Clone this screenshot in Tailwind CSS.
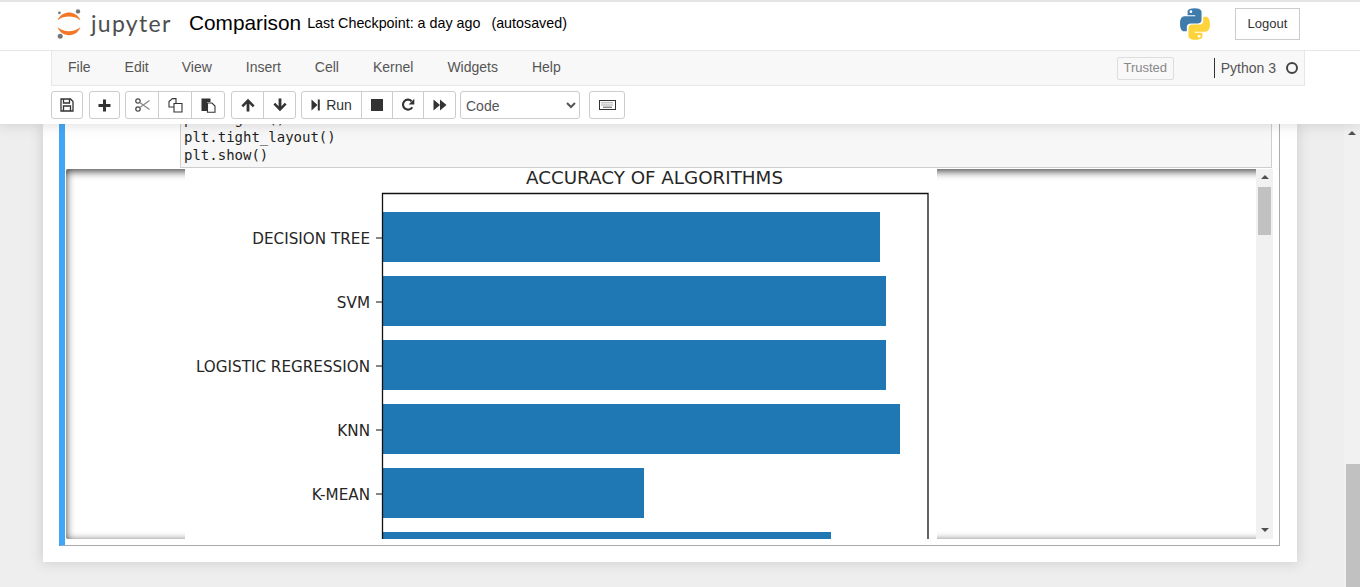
<!DOCTYPE html>
<html lang="en">
  <head>
    <meta charset="UTF-8" />
    <title>Comparison</title>
    <script src="https://cdn.jsdelivr.net/npm/@tailwindcss/browser@4"></script>
  </head>
  <body class="h-screen overflow-hidden flex flex-col bg-[#eeeeee] font-['Liberation_Sans',sans-serif] text-[#333333]">
    <!-- header -->
    <header class="relative z-10 h-[124px] shrink-0 bg-white border-t-2 border-[#e4e4e4] shadow-[0_0_12px_1px_rgba(87,87,87,0.2)]">
      <div class="h-[44px] mb-[4px] flex items-center pl-[57px] pr-[60px]">
        <svg class="w-[24px] h-[30px] shrink-0" viewBox="0 0 24 30">
          <path d="M0.5 11.5C3 5.5 8 3.6 12 3.6C16 3.6 21 5.5 23.5 11.5C20 8.4 16 7.6 12 7.6C8 7.6 4 8.4 0.5 11.5Z" fill="#f37726" />
          <path d="M0.5 18C3 24.5 8 26.2 12 26.2C16 26.2 21 24.5 23.5 18C20 21.4 16 22.2 12 22.2C8 22.2 4 21.4 0.5 18Z" fill="#f37726" />
          <circle cx="21" cy="2.4" r="2.2" fill="#767677" />
          <circle cx="2.4" cy="3.8" r="1.4" fill="#767677" />
          <circle cx="3.2" cy="27.2" r="2.5" fill="#767677" />
        </svg>
        <span class="ml-[10px] -mt-[1px] w-[98px] shrink-0 font-['Lato',sans-serif] text-[23px] leading-none tracking-[1.3px] text-[#4e4e4e]">jupyter</span>
        <span class="-mt-[3px] text-[20.8px] text-black">Comparison</span>
        <span class="ml-[6px] text-[14.3px] text-black">Last Checkpoint: a day ago</span>
        <span class="ml-[11px] text-[14.3px] text-black">(autosaved)</span>
        <svg class="ml-auto w-[30px] h-[32px] shrink-0" viewBox="0 0 110 116">
          <path d="M54 0C26 0 28 12 28 12V26H56V30H17C17 30 0 28 0 57C0 86 15 85 15 85H25V71C25 71 24 56 39 56H65C65 56 79 56 79 43V14C79 14 81 0 54 0Z" fill="#3f7cac" />
          <circle cx="40" cy="13" r="5" fill="#ffffff" />
          <path d="M56 116C84 116 82 104 82 104V90H54V86H93C93 86 110 88 110 59C110 30 95 31 95 31H85V45C85 45 86 60 71 60H45C45 60 31 60 31 73V102C31 102 29 116 56 116Z" fill="#ffd43b" />
          <circle cx="70" cy="103" r="5" fill="#ffffff" />
        </svg>
        <button class="ml-[25px] w-[65px] h-[32px] border border-[#cccccc] text-[13px] text-[#333333]">Logout</button>
      </div>
      <!-- menu bar -->
      <div class="border-t border-[#e7e7e7]">
        <nav class="ml-[51px] w-[1254px] h-[35px] flex items-center pb-[2px] bg-[#f8f8f8] border-x border-b border-[#e7e7e7] text-[14px] text-[#555555]">
          <span class="ml-[16px]">File</span>
          <span class="ml-[34px]">Edit</span>
          <span class="ml-[33px]">View</span>
          <span class="ml-[34px]">Insert</span>
          <span class="ml-[34px]">Cell</span>
          <span class="ml-[34px]">Kernel</span>
          <span class="ml-[34px]">Widgets</span>
          <span class="ml-[34px]">Help</span>
          <span class="ml-auto mt-[2px] w-[57px] h-[23px] flex items-center justify-center border border-[#dddddd] rounded-[2px] text-[13px] text-[#888888]">Trusted</span>
          <span class="ml-[40px] mt-[2px] w-px h-[20px] bg-[#333333]"></span>
          <span class="ml-[6px] mt-[2px] text-[#555555]">Python 3</span>
          <span class="ml-[10px] mt-[2px] mr-[6px] w-[12px] h-[12px] rounded-full border-2 border-[#444444]"></span>
        </nav>
      </div>
      <!-- toolbar -->
      <div class="ml-[51px] mt-[5px] flex items-center h-[28px] text-[#333333]">
        <div class="flex h-full border border-[#cccccc] rounded-[3px] items-center justify-center w-[32px]">
          <svg class="w-[14px] h-[14px]" viewBox="0 0 14 14" fill="none" stroke="#333333" stroke-width="1.3">
            <path d="M1 1H10.5L13 3.5V13H1Z" />
            <path d="M3.5 1V5H9.5V1M3.5 13V8H10.5V13" />
          </svg>
        </div>
        <div class="ml-[6px] flex h-full border border-[#cccccc] rounded-[3px] items-center justify-center w-[31px]">
          <svg class="w-[13px] h-[13px]" viewBox="0 0 13 13" fill="#333333"><path d="M5 0.5H8V5H12.5V8H8V12.5H5V8H0.5V5H5Z" /></svg>
        </div>
        <div class="ml-[5px] flex h-full border border-[#cccccc] rounded-[3px] divide-x divide-[#cccccc]">
          <div class="w-[33px] flex items-center justify-center">
            <svg class="w-[15px] h-[14px]" viewBox="0 0 15 14" fill="none" stroke="#444444" stroke-width="1.2">
              <circle cx="3" cy="3" r="2.2" />
              <circle cx="3" cy="11" r="2.2" />
              <path d="M4.8 4.4L14.5 11.5M4.8 9.6L14.5 2.5" stroke="#888888" />
            </svg>
          </div>
          <div class="w-[33px] flex items-center justify-center">
            <svg class="w-[15px] h-[15px]" viewBox="0 0 15 15" fill="#ffffff" stroke="#333333" stroke-width="1.1">
              <path d="M1 3.5L4.5 0.6H8V9H1Z" />
              <path d="M6 5.5H10L14 5.5V14H6Z" />
            </svg>
          </div>
          <div class="w-[32px] flex items-center justify-center">
            <svg class="w-[15px] h-[15px]" viewBox="0 0 15 15">
              <path d="M0.5 0.5H9.5V4H6V13H0.5Z" fill="#333333" />
              <path d="M6.5 5H11L14 8V14.2H6.5Z" fill="#ffffff" stroke="#333333" stroke-width="1.1" />
            </svg>
          </div>
        </div>
        <div class="ml-[6px] flex h-full border border-[#cccccc] rounded-[3px] divide-x divide-[#cccccc]">
          <div class="w-[32px] flex items-center justify-center">
            <svg class="w-[14px] h-[14px]" viewBox="0 0 14 14" fill="#333333"><path d="M7 0.8L13.6 7.4L11.8 9.2L8.4 5.8V13.4H5.6V5.8L2.2 9.2L0.4 7.4Z" /></svg>
          </div>
          <div class="w-[31px] flex items-center justify-center">
            <svg class="w-[14px] h-[14px]" viewBox="0 0 14 14" fill="#333333"><path d="M7 13.2L13.6 6.6L11.8 4.8L8.4 8.2V0.6H5.6V8.2L2.2 4.8L0.4 6.6Z" /></svg>
          </div>
        </div>
        <div class="ml-[5px] flex h-full border border-[#cccccc] rounded-[3px] divide-x divide-[#cccccc]">
          <div class="w-[60px] flex items-center justify-center gap-[6px] text-[14px] text-[#333333]">
            <svg class="w-[9px] h-[12px]" viewBox="0 0 9 12" fill="#333333"><path d="M0.5 0.5L6.5 6L0.5 11.5ZM6.8 0.5H8.8V11.5H6.8Z" /></svg>
            <span>Run</span>
          </div>
          <div class="w-[31px] flex items-center justify-center">
            <span class="w-[12px] h-[12px] bg-[#333333]"></span>
          </div>
          <div class="w-[31px] flex items-center justify-center">
            <svg class="w-[14px] h-[14px]" viewBox="0 0 14 14" fill="none">
              <path d="M11.3 9.2A5 5 0 1 1 10.6 3.2" stroke="#333333" stroke-width="2.1" />
              <path d="M13.3 0.8V6.4H7.7Z" fill="#333333" />
            </svg>
          </div>
          <div class="w-[31px] flex items-center justify-center">
            <svg class="w-[14px] h-[12px]" viewBox="0 0 14 12" fill="#333333"><path d="M0.5 0.5L7 6L0.5 11.5ZM7 0.5L13.5 6L7 11.5Z" /></svg>
          </div>
        </div>
        <select class="ml-[4px] w-[120px] h-full bg-white border border-[#cccccc] rounded-[3px] pl-[1px] pt-[2px] text-[14px] text-[#555555]">
          <option>Code</option>
        </select>
        <div class="ml-[9px] flex h-full border border-[#cccccc] rounded-[3px] items-center justify-center w-[36px]">
          <svg class="w-[17px] h-[10px]" viewBox="0 0 17 10">
            <rect x="0.5" y="0.5" width="16" height="9" fill="#ffffff" stroke="#333333" />
            <path d="M2.5 2.8H14.5M2.5 5H14.5" stroke="#555555" stroke-dasharray="1 1" />
            <path d="M4 7.2H13" stroke="#555555" />
          </svg>
        </div>
      </div>
    </header>

    <!-- notebook -->
    <main class="relative flex-1 overflow-hidden">
      <div class="ml-[43px] w-[1254px] h-[438px] bg-white shadow-[0_0_12px_1px_rgba(87,87,87,0.2)]">
        <div class="ml-[16px] w-[1221px] h-[422px] flex flex-col border-l-[6px] border-l-[#42a5f5] border-r border-b border-r-[#ababab] border-b-[#ababab]">
          <!-- code cell -->
          <div class="h-[44px] shrink-0 flex">
            <div class="w-[115px] shrink-0"></div>
            <div class="flex-1 mr-[7px] flex flex-col justify-end overflow-hidden bg-[#f7f7f7] border-l border-r border-b border-[#cfcfcf] pl-[3px] pb-[3px] font-['DejaVu_Sans_Mono',monospace] text-[14px] leading-[18px] text-[#1f1f1f] whitespace-pre">
              <div>plt.legend()</div>
              <div>plt.tight_layout()</div>
              <div>plt.show()</div>
            </div>
          </div>
          <!-- output -->
          <div class="mt-px ml-px mr-[6px] h-[370px] flex justify-between rounded-[2px] shadow-[inset_0_2px_8px_rgba(0,0,0,0.8)] pl-[119px]">
            <div class="w-[752px] h-full bg-white">
              <svg class="block" width="752" height="370" viewBox="0 0 752 370" font-family="DejaVu Sans, sans-serif" fill="#262626">
                <text x="469.5" y="15" text-anchor="middle" font-size="18.3">ACCURACY OF ALGORITHMS</text>
                <g fill="#1f77b4">
                  <rect x="198" y="43" width="497" height="50" />
                  <rect x="198" y="107" width="503" height="50" />
                  <rect x="198" y="171" width="503" height="50" />
                  <rect x="198" y="235" width="517" height="50" />
                  <rect x="198" y="299" width="261" height="50" />
                  <rect x="198" y="363" width="448" height="7" />
                </g>
                <path d="M197.5 370V24.5H743V370" fill="none" stroke="#111111" stroke-width="1.3" />
                <path d="M191 69H197M191 133H197M191 197H197M191 261H197M191 325H197" stroke="#111111" />
                <g text-anchor="end" font-size="15.2">
                  <text x="185" y="75">DECISION TREE</text>
                  <text x="185" y="139">SVM</text>
                  <text x="185" y="203">LOGISTIC REGRESSION</text>
                  <text x="185" y="267">KNN</text>
                  <text x="185" y="331">K-MEAN</text>
                </g>
              </svg>
            </div>
            <!-- output scrollbar -->
            <div class="w-[17px] h-full flex flex-col items-center bg-[#f1f1f1]">
              <svg class="mt-[6px] w-[8px] h-[4px]" viewBox="0 0 8 4" fill="#505050"><path d="M4 0L8 4H0Z" /></svg>
              <div class="mt-[8px] w-[13px] h-[48px] bg-[#c1c1c1]"></div>
              <svg class="mt-auto mb-[7px] w-[8px] h-[4px]" viewBox="0 0 8 4" fill="#505050"><path d="M4 4L0 0H8Z" /></svg>
            </div>
          </div>
        </div>
      </div>
      <!-- page scrollbar -->
      <div class="absolute right-0 top-0 bottom-0 w-[16px] flex flex-col items-center bg-[#f1f1f1]">
        <svg class="mt-[7px] w-[8px] h-[4px]" viewBox="0 0 8 4" fill="#505050"><path d="M4 0L8 4H0Z" /></svg>
        <div class="mt-[329px] w-[14px] ml-[2px] flex-1 bg-[#c1c1c1]"></div>
      </div>
    </main>
  </body>
</html>
